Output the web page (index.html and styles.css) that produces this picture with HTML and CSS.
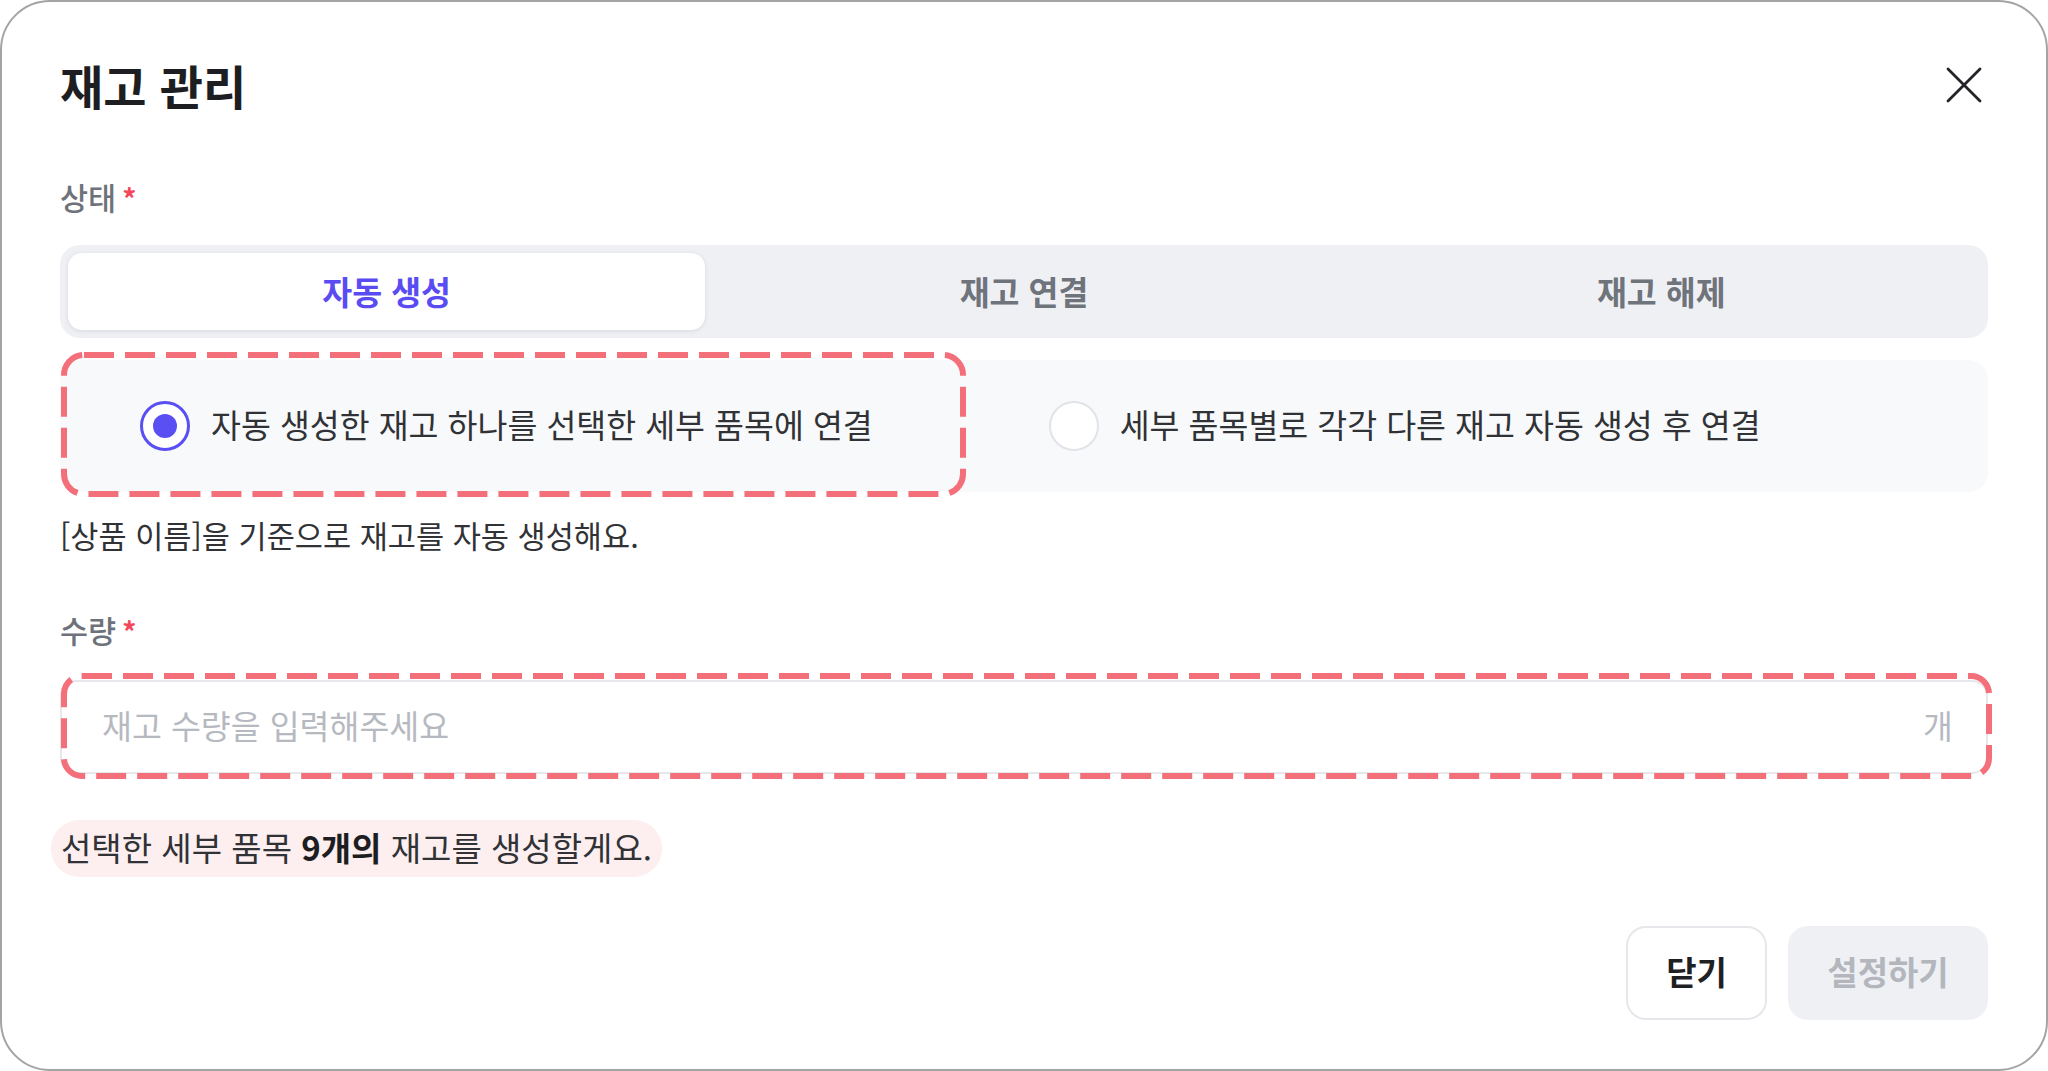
FILE: index.html
```html
<!DOCTYPE html>
<html lang="ko">
<head>
<meta charset="utf-8">
<title>재고 관리</title>
<link rel="stylesheet" href="styles.css">
</head>
<body>
<div class="modal">
  <div class="header">
    <h1 class="title">재고 관리</h1>
    <button class="close" aria-label="닫기">
      <svg viewBox="0 0 36 36" width="36" height="36"><path d="M2 2 L34 34 M34 2 L2 34" /></svg>
    </button>
  </div>

  <div class="label label-state">상태<span class="req">*</span></div>
  <div class="tabs">
    <div class="tab tab-active">자동 생성</div>
    <div class="tab">재고 연결</div>
    <div class="tab">재고 해제</div>
  </div>

  <div class="opt-group">
    <div class="opt opt-first">
      <span class="radio radio-on"></span>
      <span class="opt-text">자동 생성한 재고 하나를 선택한 세부 품목에 연결</span>
    </div>
    <div class="opt">
      <span class="radio"></span>
      <span class="opt-text">세부 품목별로 각각 다른 재고 자동 생성 후 연결</span>
    </div>
    <svg class="mark mark-opt" aria-hidden="true"><rect class="mark-rect"/></svg>
  </div>

  <p class="helper">[상품 이름]을 기준으로 재고를 자동 생성해요.</p>

  <div class="label label-qty">수량<span class="req">*</span></div>
  <div class="input-wrap">
    <div class="input">
      <span class="placeholder">재고 수량을 입력해주세요</span>
      <span class="suffix">개</span>
    </div>
    <svg class="mark mark-input" aria-hidden="true"><rect class="mark-rect"/></svg>
  </div>

  <div class="pill">선택한 세부 품목 <b>9개의</b> 재고를 생성할게요.</div>

  <div class="footer">
    <button class="btn btn-close">닫기</button>
    <button class="btn btn-submit">설정하기</button>
  </div>
</div>
</body>
</html>
```

FILE: styles.css
```css
* { box-sizing: border-box; }
html, body { margin: 0; padding: 0; background: #ffffff; }
body {
  font-family: "Noto Sans CJK KR", "Noto Sans", sans-serif;
  color: #303236;
}
.modal {
  width: 2048px;
  height: 1071px;
  border: 2px solid #a4a4a4;
  border-radius: 50px;
  padding: 54px 58px 0 58px;
  display: flex;
  flex-direction: column;
  background: #fff;
}
.header {
  height: 58px;
  display: flex;
  align-items: center;
  justify-content: space-between;
}
.title {
  margin: 0;
  font-size: 47px;
  line-height: 58px;
  font-weight: 700;
  color: #1d1e21;
}
.close {
  border: 0;
  background: none;
  padding: 0;
  margin-right: 6px;
  width: 36px;
  height: 36px;
  display: flex;
}
.close svg path {
  stroke: #222326;
  stroke-width: 2.8;
  stroke-linecap: round;
  fill: none;
}
.label {
  font-size: 30.5px;
  line-height: 40px;
  font-weight: 500;
  color: #6e727a;
}
.label-state { margin-top: 63px; }
.label-qty { margin-top: 55px; }
.req {
  color: #f2485a;
  font-weight: 700;
  font-size: 28px;
  margin-left: 6px;
}
.tabs {
  margin-top: 27px;
  height: 93px;
  background: #eff0f4;
  border-radius: 20px;
  padding: 8px;
  display: grid;
  grid-template-columns: 1fr 1fr 1fr;
}
.tab {
  display: flex;
  align-items: center;
  justify-content: center;
  padding-bottom: 3px;
  font-size: 32.5px;
  font-weight: 700;
  color: #6f737b;
  border-radius: 14px;
}
.tab-active {
  background: #fff;
  color: #5a4cf2;
  box-shadow: 0 1px 4px rgba(20, 24, 40, 0.10);
}
.opt-group {
  position: relative;
  margin-top: 22px;
  height: 132px;
  background: #f8f9fb;
  border-radius: 20px;
  display: flex;
  align-items: center;
  padding-left: 80px;
  gap: 176px;
}
.opt {
  display: flex;
  align-items: center;
  gap: 21px;
}
.radio {
  width: 50px;
  height: 50px;
  border-radius: 50%;
  border: 2px solid #e1e3e8;
  background: #fff;
  display: flex;
  align-items: center;
  justify-content: center;
  flex: none;
}
.radio-on {
  border: 3px solid #5a4ff3;
}
.radio-on::after {
  content: "";
  width: 24px;
  height: 24px;
  border-radius: 50%;
  background: #5a4ff3;
}
.opt-text {
  font-size: 32.5px;
  line-height: 40px;
  padding-bottom: 5px;
  color: #303236;
}
.mark {
  position: absolute;
  overflow: visible;
  pointer-events: none;
}
.mark-rect {
  x: 3px;
  y: 3px;
  width: calc(100% - 6px);
  height: calc(100% - 6px);
  rx: 20px;
  fill: none;
  stroke: #f3707b;
  stroke-width: 6;
  stroke-dasharray: 30 11;
}
.mark-opt {
  left: 1px;
  top: -8px;
  width: 905px;
  height: 145px;
}
.helper {
  margin: 23px 0 0 0;
  font-size: 30.6px;
  line-height: 40px;
  color: #303236;
}
.input-wrap {
  position: relative;
  margin-top: 29px;
}
.input {
  height: 94px;
  border: 2px solid #e6e8ec;
  border-radius: 16px;
  padding: 0 33px 5px 40px;
  display: flex;
  align-items: center;
  justify-content: space-between;
  font-size: 32.5px;
  color: #b6b9c0;
  background: #fff;
}
.mark-input {
  left: 1px;
  top: -7px;
  width: 1931px;
  height: 106px;
}
.mark-input .mark-rect { rx: 18px; }
.pill {
  align-self: flex-start;
  margin: 46px 0 0 -9px;
  height: 57px;
  padding: 0 10px 3px 10px;
  border-radius: 28px;
  background: #fdeff0;
  display: flex;
  align-items: center;
  font-size: 33px;
  color: #303236;
  white-space: pre;
}
.pill b { font-weight: 700; color: #1d1e21; }
.footer {
  margin-top: 49px;
  display: flex;
  justify-content: flex-end;
  gap: 21px;
}
.btn {
  height: 94px;
  border-radius: 20px;
  font-family: "Noto Sans CJK KR", "Noto Sans", sans-serif;
  font-size: 33px;
  font-weight: 700;
  padding: 0 0 5px 0;
}
.btn-close {
  width: 141px;
  background: #fff;
  border: 2px solid #e5e7eb;
  color: #1f2023;
}
.btn-submit {
  width: 200px;
  background: #eff0f4;
  border: 0;
  color: #b3b6bd;
}
```
